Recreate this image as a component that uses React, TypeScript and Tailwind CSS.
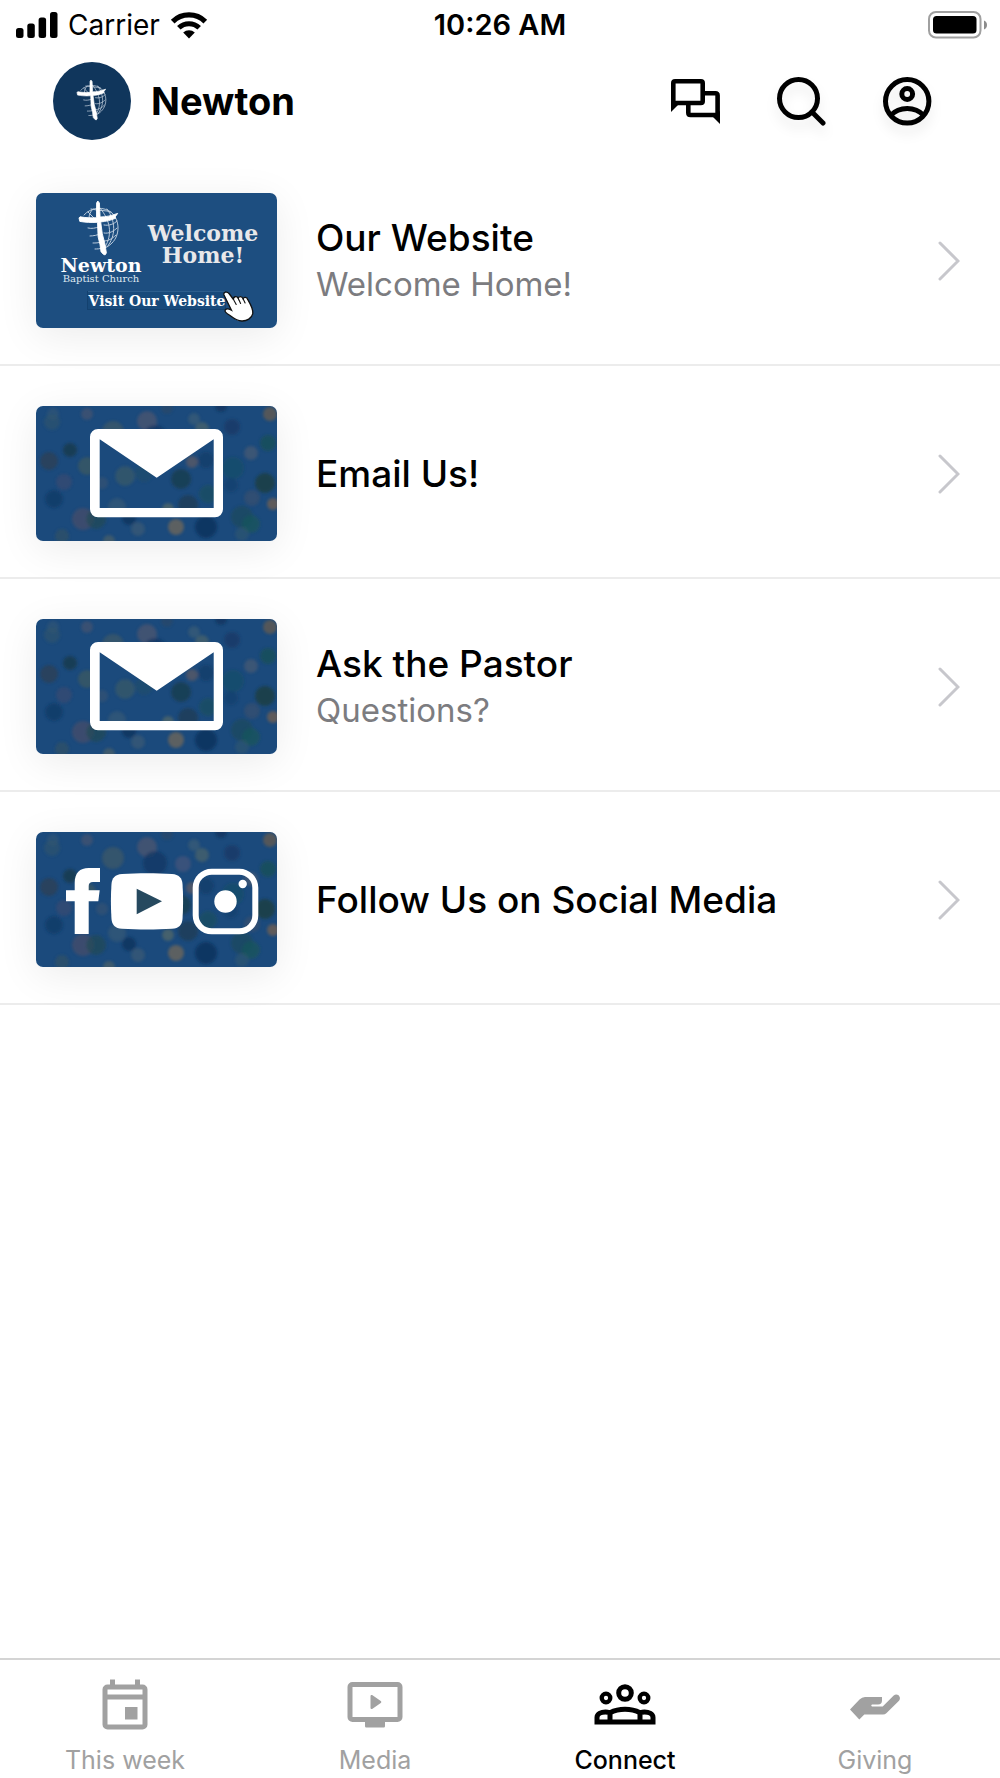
import type { ReactNode } from 'react'

const SignalIcon = () => (
  <svg width="42" height="26" viewBox="0 0 42 26" aria-hidden="true">
    <rect x="0" y="16" width="7.5" height="10" rx="2.5" />
    <rect x="11.3" y="11.5" width="7.5" height="14.5" rx="2.5" />
    <rect x="22.6" y="5.5" width="7.5" height="20.5" rx="2.5" />
    <rect x="34" y="0" width="7.5" height="26" rx="2.5" />
  </svg>
)

const WifiIcon = () => (
  <svg width="38" height="28" viewBox="0 0 38 28" fill="none" stroke="#000" aria-hidden="true">
    <path d="M2.7 10.6a23.2 23.2 0 0 1 32.6 0" strokeWidth="5.2" />
    <path d="M8.8 16.8a14.6 14.6 0 0 1 20.4 0" strokeWidth="5" />
    <path d="M13.2 21.6a8.4 8.4 0 0 1 11.6 0L19 27.4z" fill="#000" stroke="none" />
  </svg>
)

const BatteryIcon = () => (
  <svg width="60" height="28" viewBox="0 0 60 28" aria-hidden="true">
    <rect x="1" y="1" width="51.5" height="25.5" rx="7" fill="none" stroke="#a0a0a0" strokeWidth="2" />
    <rect x="5" y="5" width="43.5" height="17.5" rx="3.5" />
    <path d="M56 9.5c4 1.5 4 7.5 0 9z" fill="#8c8c8c" />
  </svg>
)

const ChatIcon = () => (
  <svg width="49" height="45" viewBox="0 0 49 45" fill="none" stroke="#000" strokeWidth="4.6" aria-hidden="true">
    <rect x="2.3" y="2.3" width="29.4" height="21.7" rx="1.8" />
    <path d="M0 20v13l7-7z" fill="#000" stroke="none" />
    <path d="M33 14.3h11.4q2.2 0 2.2 2.2V36H19.5q-2.2 0-2.2-2.2V25" />
    <path d="M49 32v13l-8-8z" fill="#000" stroke="none" />
  </svg>
)

const SearchIcon = () => (
  <svg width="49" height="49" viewBox="0 0 49 49" fill="none" stroke="#000" strokeWidth="5" strokeLinecap="round" aria-hidden="true">
    <circle cx="21.5" cy="21.5" r="19" />
    <path d="M35 35l11 11" />
  </svg>
)

const AccountIcon = () => (
  <svg width="49" height="49" viewBox="0 0 49 49" fill="none" stroke="#000" strokeWidth="5" aria-hidden="true">
    <circle cx="24.2" cy="24.3" r="21.7" />
    <circle cx="24.2" cy="17" r="5.4" />
    <path d="M7.5 38.5c9-9.4 24.4-9.4 33.4 0" />
  </svg>
)

const ChevronIcon = () => (
  <svg width="22" height="40" viewBox="0 0 22 40" fill="none" stroke="#c7c7cc" strokeWidth="3" strokeLinecap="round" aria-hidden="true">
    <path d="M2 2l18 18L2 38" />
  </svg>
)

// Cross over a globe, drawn in a 40x56 box
const CrossLogo = () => (
  <>
    <g fill="none" stroke="#d7e1ec" strokeWidth="1" strokeLinecap="round" opacity="0.85">
      <path d="M5 14C12 6 25 5 33 12c8 8 8 22 0 30-3 3-6 5-9 5" />
      <path d="M12 8c8 2 15 1 20 3M28 8c9 12 9 27 0 38M21 7c10 12 13 26 5 39" />
      <path d="M9 11l6 6M14 8c-3 3-4 6-4 9" />
      <path d="M25 24c5 1 10-1 13-4M25 32c5 1 10-2 13-5M25 40c4 0 8-2 12-6" />
      <path d="M9 27c4 1 7 0 11-1M11 35c4 0 7-1 10-2M14 42c3 0 5 0 8-1M16 48c2 0 5 0 7-1" />
    </g>
    <path
      d="M17.6 2l1.2-2 1.6 2 .7 14c6 0 11-1.4 17.6-3.6l-2.8 3.8 1 .9c-5 2.3-9.8 3.4-15.2 3.8l1.6 12 2.4 9 1.7 10-1.3 2-1.8-.6-2.3-2.6-1-7-1.9-8-.6-14.4c-6.2.4-12 .1-17.7-.9L0 17l1-1.2c5.8 1 11 1.3 16.5.9z"
      fill="#fff"
      stroke="#fff"
      strokeWidth="0.9"
    />
  </>
)

// cx, cy, r, fill, opacity
const DOTS = [
  [17, 8, 6, '#476273', 0.4], [16, 16, 8, '#31566a', 0.6], [51, 8, 6, '#60596a', 0.5],
  [77, 26, 11, '#5c6757', 0.45], [111, 15, 10, '#665b69', 0.55], [119, 31, 12, '#10345f', 0.7],
  [131, 2, 6, '#30485e', 0.5], [147, 32, 8, '#71617b', 0.4], [158, 13, 6, '#516b72', 0.45],
  [166, 23, 7, '#6a7460', 0.5], [185, 0, 6, '#0d3158', 0.7], [196, 21, 8, '#153a66', 0.8],
  [234, 8, 7, '#6c5c4c', 0.8], [232, 37, 8, '#17505a', 0.9], [215, 47, 7, '#59606f', 0.6],
  [13, 55, 9, '#2b4058', 0.9], [34, 44, 7, '#143c4c', 0.9], [28, 76, 8, '#4a4a6b', 0.5],
  [18, 93, 9, '#103b66', 0.8], [51, 60, 9, '#54614d', 0.5], [66, 77, 6, '#5b5e66', 0.35],
  [89, 70, 10, '#48605f', 0.55], [108, 67, 9, '#264f63', 0.5], [145, 73, 10, '#1a3d50', 0.9],
  [156, 56, 6, '#77605c', 0.6], [172, 88, 9, '#165060', 0.8], [170, 54, 8, '#123a66', 0.7],
  [197, 62, 11, '#175063', 0.6], [229, 77, 10, '#1c3f46', 1], [195, 79, 7, '#163f6c', 0.7],
  [216, 92, 8, '#4d5566', 0.45], [237, 98, 6, '#7b6350', 0.8], [206, 111, 11, '#1b4a58', 0.7],
  [215, 118, 9, '#17565a', 0.8], [206, 128, 7, '#3f6269', 0.4], [170, 121, 11, '#0b3460', 1],
  [140, 121, 8, '#716959', 0.85], [152, 99, 10, '#213d55', 0.85], [132, 103, 6, '#6a7460', 0.6],
  [81, 101, 9, '#4c6370', 0.45], [93, 112, 7, '#0e345e', 0.9], [102, 123, 7, '#4d6370', 0.5],
  [47, 113, 11, '#5c5060', 0.55], [60, 113, 10, '#244a54', 0.75], [26, 130, 7, '#325363', 0.7],
  [73, 135, 6, '#5d685f', 0.6],
] as const

const BokehBackdrop = ({ id }: { id: string }) => (
  <>
    <defs>
      <filter id={id} x="-20%" y="-20%" width="140%" height="140%">
        <feGaussianBlur stdDeviation="1.4" />
      </filter>
    </defs>
    <rect width="241" height="135" fill="#1b4a7c" />
    <g filter={`url(#${id})`} opacity="0.9">
      {DOTS.map(([cx, cy, r, fill, opacity]) => (
        <circle key={`${cx}-${cy}`} cx={cx} cy={cy} r={r} fill={fill} opacity={opacity} />
      ))}
    </g>
  </>
)

const WelcomeArt = () => (
  <>
    <rect width="241" height="135" fill="#1d4e80" />
    <g transform="translate(43 8)">
      <CrossLogo />
    </g>
    <g fontFamily="'DejaVu Serif', serif" fontWeight="700" fill="#fff" textAnchor="middle">
      <g fontSize="22" fill="#e8e8ea">
        <text x="167" y="48">Welcome</text>
        <text x="167" y="70">Home!</text>
      </g>
      <text x="65" y="79" fontSize="19">Newton</text>
      <text x="65" y="89" fontSize="10" fontWeight="400" fill="#dfe8f1">Baptist Church</text>
      <rect x="51.5" y="98.5" width="138" height="18" fill="#184a7b" stroke="#123f6d" strokeWidth="0.8" />
      <path d="M52 98.5h137" stroke="#356696" strokeWidth="0.8" />
      <text x="121" y="113" fontSize="14">Visit Our Website</text>
    </g>
    <path
      d="M188 102c-1-3 3-4 5-1.5l4.5 6c-.5-3 3.2-4 4.8-1 .2-2.5 3.7-2.7 4.8.2.8-2 3.9-1.8 4.7 1 3 5 5.5 9.5 5 14-1 4.5-6 7.5-11 7.3-5.5 0-9-3.5-12.5-6-3-1.6-5-3.5-4-5.2 1.3-1.6 4.2-.6 6.2.4z"
      fill="#fff"
      stroke="#111"
      strokeWidth="1.3"
    />
    <path d="M197.5 106.5l2.7 5M202.3 105.5l2.3 5M207.1 105.7l2 4.3" fill="none" stroke="#111" strokeWidth="1.1" strokeLinecap="round" />
  </>
)

const EnvelopeArt = ({ id }: { id: string }) => (
  <>
    <BokehBackdrop id={id} />
    <path
      fill="#fff"
      fillRule="evenodd"
      d="M62 23h117a8 8 0 0 1 8 8v72.3a8 8 0 0 1-8 8H62a8 8 0 0 1-8-8V31a8 8 0 0 1 8-8zM63.7 33.3V102h114V33.3l-57 38.4z"
    />
  </>
)

const SocialArt = () => (
  <>
    <BokehBackdrop id="bokeh-social" />
    <g fill="#fff">
      <path d="M64 36v14h-7q-4.3 0-4.3 4v4.3h11l-1.4 11h-9.6V102h-14V69.3H30v-11h8.7V51c0-10 5-15 14-15z" />
      <path d="M86 42c16-1 34-1 50 0 7 .5 10 4 10.5 10 .8 11 .8 23 0 35-.5 6-3.5 9.3-10.500 9.800-16 1-34 1-50 0-7-.5-10-3.800-10.500-9.800-.8-12-.8-24 0-35 .5-6 3.500-9.500 10.500-10z" />
      <circle cx="189.5" cy="69.5" r="11.2" />
      <circle cx="206.7" cy="52" r="4.2" />
    </g>
    <path d="M100.7 56.7v25.600L126 69.3z" fill="#26495f" />
    <rect x="159.7" y="39.7" width="59.6" height="59.6" rx="16" fill="none" stroke="#fff" strokeWidth="6" />
  </>
)

const CalendarIcon = () => (
  <svg width="60" height="60" viewBox="0 0 24 24" fill="currentColor" aria-hidden="true">
    <path
      fillRule="evenodd"
      d="M6 1h2v2h8V1h2v2h1a2 2 0 0 1 2 2v14a2 2 0 0 1-2 2H5a2 2 0 0 1-2-2V5a2 2 0 0 1 2-2h1zM5 5v2h14V5zM5 9v10h14V9z"
    />
    <path d="M12 12h5v5h-5z" />
  </svg>
)

const MediaIcon = () => (
  <svg width="60" height="60" viewBox="0 0 24 24" fill="currentColor" aria-hidden="true">
    <path
      fillRule="evenodd"
      d="M3 2h18a2 2 0 0 1 2 2v12a2 2 0 0 1-2 2h-5v1.7a.5.5 0 0 1-.5.5h-7a.5.5 0 0 1-.5-.5V18H3a2 2 0 0 1-2-2V4a2 2 0 0 1 2-2zM3 4v12h18V4z"
    />
    <path d="M10.2 7.7c0-.5.4-.6.8-.4l3.3 2.3c.3.2.3.6 0 .8L11 12.7c-.4.2-.8.1-.8-.4z" />
  </svg>
)

const ConnectIcon = () => (
  <svg width="64" height="60" viewBox="0 0 64 60" fill="none" stroke="currentColor" strokeWidth="5" aria-hidden="true">
    <circle cx="32" cy="16" r="6.3" />
    <circle cx="13" cy="21" r="4.3" strokeWidth="4.3" />
    <circle cx="51" cy="21" r="4.3" strokeWidth="4.3" />
    <path d="M4 45V40.5C4 37 8 35 12.5 35c1.5 0 3 .3 4.5.8 9-4.6 21-4.6 30 0 1.5-.5 3-.8 4.5-.8C56 35 60 37 60 40.5V45zM17 35.5V45M47 35.5V45" />
  </svg>
)

const GivingIcon = () => (
  <svg width="60" height="60" viewBox="0 0 60 60" fill="currentColor" aria-hidden="true">
    <path d="M5 32.5L14.3 42.5l5-5H38q2 0 3.3-1.3L54 23.7c3-3.3-1.5-8.4-5.3-5.2L37.7 29.5H27c-1-.5-1-1.5 0-2h6q4 0 4-4V20H20q-3 0-5.5 2.5z" />
  </svg>
)

const links = [
  { title: 'Our Website', subtitle: 'Welcome Home!', art: <WelcomeArt /> },
  { title: 'Email Us!', art: <EnvelopeArt id="bokeh-email" /> },
  { title: 'Ask the Pastor', subtitle: 'Questions?', art: <EnvelopeArt id="bokeh-pastor" /> },
  { title: 'Follow Us on Social Media', art: <SocialArt /> },
]

const tabs = [
  { label: 'This week', icon: <CalendarIcon /> },
  { label: 'Media', icon: <MediaIcon /> },
  { label: 'Connect', icon: <ConnectIcon />, active: true },
  { label: 'Giving', icon: <GivingIcon /> },
]

const StatusBar = () => (
  <div className="grid h-[50px] grid-cols-[1fr_auto_1fr] items-center px-4">
    <div className="flex items-center gap-[10px]">
      <SignalIcon />
      <span className="text-[28px] leading-8">Carrier</span>
      <WifiIcon />
    </div>
    <div className="text-center text-[29px] font-semibold leading-8">10:26 AM</div>
    <div className="-mr-1 flex justify-end">
      <BatteryIcon />
    </div>
  </div>
)

const Header = () => (
  <header className="flex items-center px-[53px] pb-[13px] pt-3">
    <svg className="size-[78px] rounded-full bg-[#10365c]" viewBox="0 0 78 78" aria-hidden="true">
      <g transform="translate(24 18) scale(0.74)">
        <CrossLogo />
      </g>
    </svg>
    <h1 className="ml-5 text-[38px] font-bold leading-[46px]">Newton</h1>
    <div className="ml-auto flex items-center gap-[57px] pr-[15px]">
      <button type="button" aria-label="Messages">
        <ChatIcon />
      </button>
      <button type="button" aria-label="Search" className="drop-shadow-[0_8px_6px_rgba(0,0,0,0.08)]">
        <SearchIcon />
      </button>
      <button type="button" aria-label="Account" className="drop-shadow-[0_8px_6px_rgba(0,0,0,0.08)]">
        <AccountIcon />
      </button>
    </div>
  </header>
)

type LinkRowProps = {
  title: string
  subtitle?: string
  art: ReactNode
}

const LinkRow = ({ title, subtitle, art }: LinkRowProps) => (
  <li className="border-b-2 border-[#ececec]">
    <a href="#" className="flex items-center pb-9 pl-9 pr-10 pt-10">
      <svg
        className="h-[135px] w-[241px] shrink-0 rounded-[7px] shadow-[0_8px_40px_rgba(0,0,0,0.08)]"
        viewBox="0 0 241 135"
        aria-hidden="true"
      >
        {art}
      </svg>
      <div className="ml-[39px] min-w-0 flex-1">
        <div className="text-[37px] font-medium leading-[46px]">{title}</div>
        {subtitle && <div className="text-[33px] leading-[46px] text-[#7c7c80]">{subtitle}</div>}
      </div>
      <ChevronIcon />
    </a>
  </li>
)

export default function App() {
  return (
    <div className="flex min-h-screen flex-col bg-white font-['Inter',sans-serif] text-black">
      <StatusBar />
      <Header />

      <main className="flex-1">
        <ul>
          {links.map((link) => (
            <LinkRow key={link.title} {...link} />
          ))}
        </ul>
      </main>

      <nav className="grid grid-cols-4 border-t-2 border-[#d4d4d4] pb-0.5 pt-[17px]">
        {tabs.map((tab) => (
          <a
            key={tab.label}
            href="#"
            aria-current={tab.active ? 'page' : undefined}
            className={`flex flex-col items-center gap-[7px] ${tab.active ? 'font-medium text-black' : 'font-normal text-[#a1a1a1]'}`}
          >
            {tab.icon}
            <span className="text-[25px] leading-8">{tab.label}</span>
          </a>
        ))}
      </nav>
    </div>
  )
}
